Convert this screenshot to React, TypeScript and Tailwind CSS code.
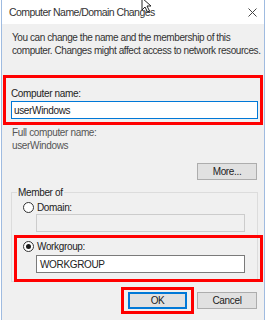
import React from "react";

function Radio({ checked }: { checked?: boolean }) {
  return (
    <span className="w-[11px] h-[11px] rounded-full border border-[#333333] bg-white flex items-center justify-center shrink-0">
      {checked && <span className="w-[5px] h-[5px] rounded-full bg-[#1a1a1a]" />}
    </span>
  );
}

function Cursor() {
  return (
    <svg className="absolute left-[141px] top-[-3px]" width="12" height="16" viewBox="0 0 12 16">
      <path d="M1 1 L1 13 L4 10 L6.5 15 L8.5 14 L6 9 L10 9 Z" fill="#ffffff" stroke="#222222" strokeWidth="1" />
    </svg>
  );
}

export default function App() {
  return (
    <div
      className="relative w-[266px] h-[320px] bg-white overflow-hidden text-[#222222] text-[10px] leading-[13px] tracking-[-0.35px] whitespace-nowrap"
      style={{ fontFamily: '"Liberation Sans", Arial, sans-serif' }}
    >
      <div className="ml-[1px] w-[264px] h-full border-x border-[#9fbbe0] flex flex-col">
        {/* title bar */}
        <div className="h-[24px] bg-white flex items-center justify-between pl-[7px] pr-[7px] shrink-0">
          <span className="text-[10.5px] tracking-[-0.55px] text-[#333333]">Computer Name/Domain Changes</span>
          <svg width="9" height="9" viewBox="0 0 9 9">
            <path d="M0.5 0.5 L8.5 8.5 M8.5 0.5 L0.5 8.5" stroke="#444444" strokeWidth="1" />
          </svg>
        </div>

        {/* body */}
        <div className="flex-1 bg-[#f0f0f0] flex flex-col">
          <p className="mt-[7px] ml-[10px] text-[#333333] tracking-[-0.42px]">
            You can change the name and the membership of this
            <br />
            computer. Changes might affect access to network resources.
          </p>

          <div className="mt-[18px] ml-[1px] w-[260px] h-[50px] border-[3px] border-[#ff0000] pl-[5px] pr-[2px] pt-[9px] flex flex-col">
            <span className="leading-[13px]">Computer name:</span>
            <div className="h-[18px] mt-[1px] bg-white border border-[#0078d7] flex items-center pl-[2px] text-[10px]">
              userWindows
            </div>
          </div>

          <div className="ml-[10px] mt-[1px] text-[#555555] flex flex-col">
            <span>Full computer name:</span>
            <span>userWindows</span>
          </div>

          <div className="flex justify-end pr-[7px] mt-[11px]">
            <button className="w-[60px] h-[17px] bg-[#e1e1e1] border border-[#adadad] text-[10px] leading-none">
              More...
            </button>
          </div>

          {/* group box */}
          <div className="relative mt-[12px] ml-[9px] w-[247px] h-[90px] border border-[#dcdcdc]">
            <span className="absolute -top-[7px] left-[5px] px-[1px] bg-[#f0f0f0]">Member of</span>
            <div className="flex items-center gap-[3px] ml-[11px] mt-[8px]">
              <Radio />
              <span>Domain:</span>
            </div>
            <div className="ml-[24px] w-[209px] h-[18px] bg-[#f0f0f0] border border-[#cccccc]" />
            <div className="relative ml-[2px] -mr-[6px] mt-[3px] h-[47px] border-[3px] border-[#ff0000] flex flex-col">
              <div className="flex items-center gap-[3px] ml-[6px] mt-[2px]">
                <Radio checked />
                <span>Workgroup:</span>
              </div>
              <div className="ml-[19px] mt-[2px] w-[209px] h-[18px] bg-white border border-[#7a7a7a] flex items-center pl-[3px]">
                WORKGROUP
              </div>
            </div>
          </div>

          <div className="flex justify-end items-center gap-[3px] pr-[7px] mt-[5px]">
            <div className="w-[73px] h-[27px] border-[3px] border-[#ff0000] flex items-center justify-center">
              <button className="w-[59px] h-[17px] bg-[#e1e1e1] border-2 border-[#0078d7] text-[10px] leading-none">
                OK
              </button>
            </div>
            <button className="w-[60px] h-[17px] bg-[#e1e1e1] border border-[#adadad] text-[10px] leading-none">
              Cancel
            </button>
          </div>
        </div>
      </div>
      <Cursor />
    </div>
  );
}
